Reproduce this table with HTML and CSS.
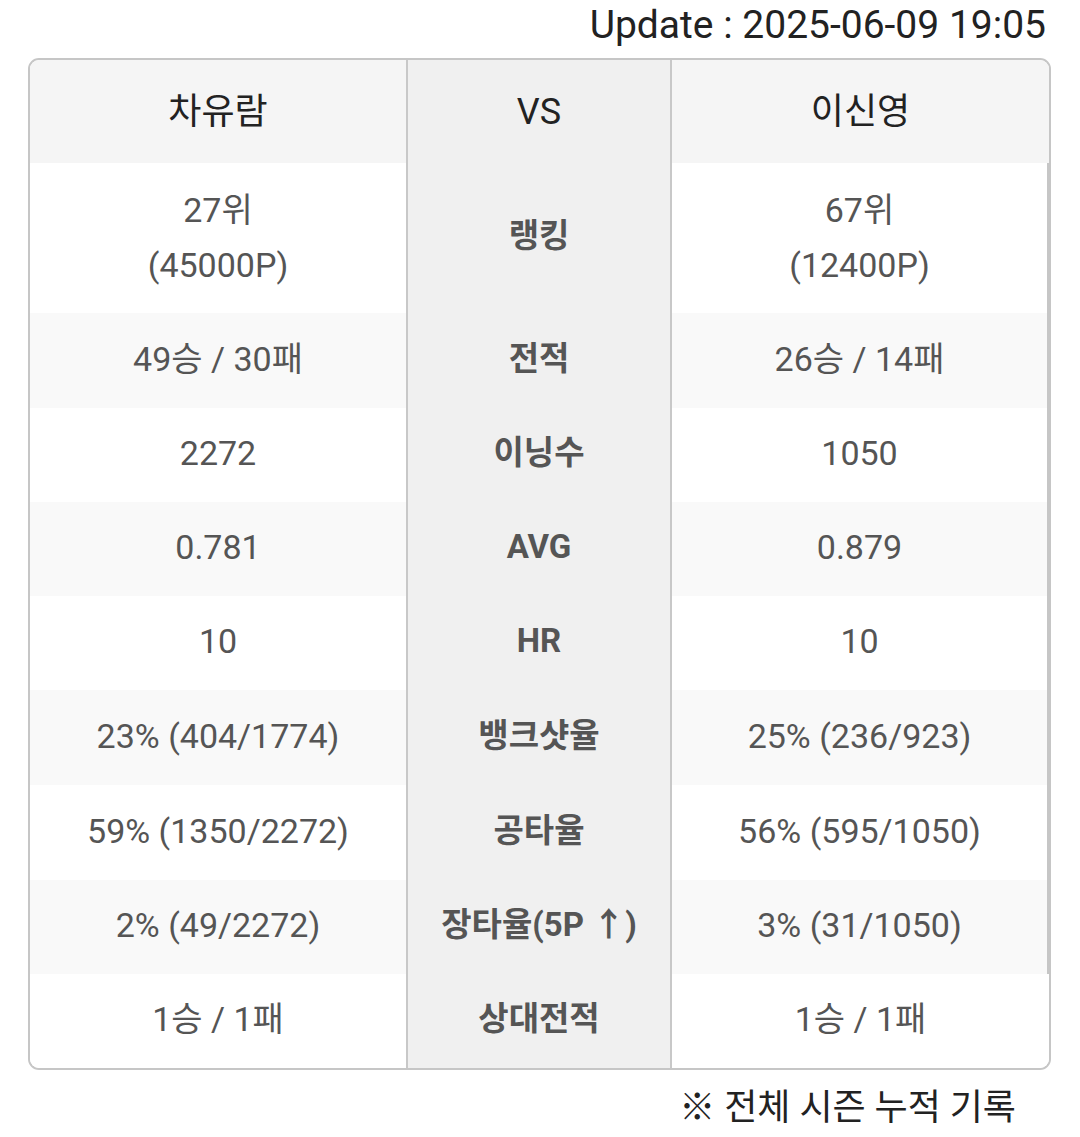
FILE: index.html
```html
<!DOCTYPE html>
<html lang="ko">
<head>
<meta charset="utf-8">
<link rel="stylesheet" href="styles.css">
</head>
<body>
<div class="page">
  <div class="update">Update : 2025-06-09 19:05</div>
  <div class="table">
    <div class="cell head left">차유람</div>
    <div class="cell head mid">VS</div>
    <div class="cell head right">이신영</div>

    <div class="cell left two">27위<br>(45000P)</div>
    <div class="cell mid label">랭킹</div>
    <div class="cell right inner two">67위<br>(12400P)</div>

    <div class="cell left alt">49승 / 30패</div>
    <div class="cell mid label">전적</div>
    <div class="cell right inner alt">26승 / 14패</div>

    <div class="cell left">2272</div>
    <div class="cell mid label">이닝수</div>
    <div class="cell right inner">1050</div>

    <div class="cell left alt">0.781</div>
    <div class="cell mid label">AVG</div>
    <div class="cell right inner alt">0.879</div>

    <div class="cell left">10</div>
    <div class="cell mid label">HR</div>
    <div class="cell right inner">10</div>

    <div class="cell left alt">23% (404/1774)</div>
    <div class="cell mid label">뱅크샷율</div>
    <div class="cell right inner alt">25% (236/923)</div>

    <div class="cell left">59% (1350/2272)</div>
    <div class="cell mid label">공타율</div>
    <div class="cell right inner">56% (595/1050)</div>

    <div class="cell left alt">2% (49/2272)</div>
    <div class="cell mid label">장타율(5P ↑)</div>
    <div class="cell right inner alt">3% (31/1050)</div>

    <div class="cell left">1승 / 1패</div>
    <div class="cell mid label">상대전적</div>
    <div class="cell right">1승 / 1패</div>
  </div>
  <div class="note">※ 전체 시즌 누적 기록</div>
</div>
</body>
</html>
```

FILE: styles.css
```css
html, body {
  margin: 0;
  padding: 0;
  background: #ffffff;
}

body {
  font-family: Roboto, "Noto Sans CJK KR", sans-serif;
  color: #222222;
}

.page {
  width: 1080px;
  display: flex;
  flex-direction: column;
}

.update {
  height: 58px;
  box-sizing: border-box;
  padding-right: 34px;
  text-align: right;
  font-size: 39px;
  line-height: 50px;
  color: #222222;
}

.table {
  margin-left: 28px;
  width: 1023px;
  box-sizing: border-box;
  border: 2px solid #c6c6c6;
  border-radius: 11px;
  overflow: hidden;
  display: grid;
  grid-template-columns: 376px 266px 377px;
  grid-template-rows: 103px 150px 95px 94px 94px 94px 95px 95px 94px 94px;
}

.cell {
  display: flex;
  align-items: center;
  justify-content: center;
  text-align: center;
  font-size: 34px;
  line-height: 40px;
  padding-bottom: 4px;
  box-sizing: border-box;
  color: #555555;
  background: #ffffff;
}

.cell.alt {
  background: #f9f9f9;
}

.cell.mid {
  background: #f0f0f0;
  border-left: 2px solid #c8c8c8;
  border-right: 2px solid #c8c8c8;
}

.cell.head {
  background: #f5f5f5;
  color: #222222;
  font-size: 36px;
  padding-bottom: 0;
}

.cell.head.mid {
  background: #f0f0f0;
}

.cell.label {
  font-weight: 700;
  font-size: 33px;
  color: #555555;
}

.cell.two {
  line-height: 55px;
  padding-bottom: 0;
}

.cell.inner {
  border-right: 2px solid #c6c6c6;
}

.note {
  padding-top: 18px;
  padding-right: 64px;
  text-align: right;
  font-size: 36px;
  line-height: 40px;
  color: #222222;
}
```
